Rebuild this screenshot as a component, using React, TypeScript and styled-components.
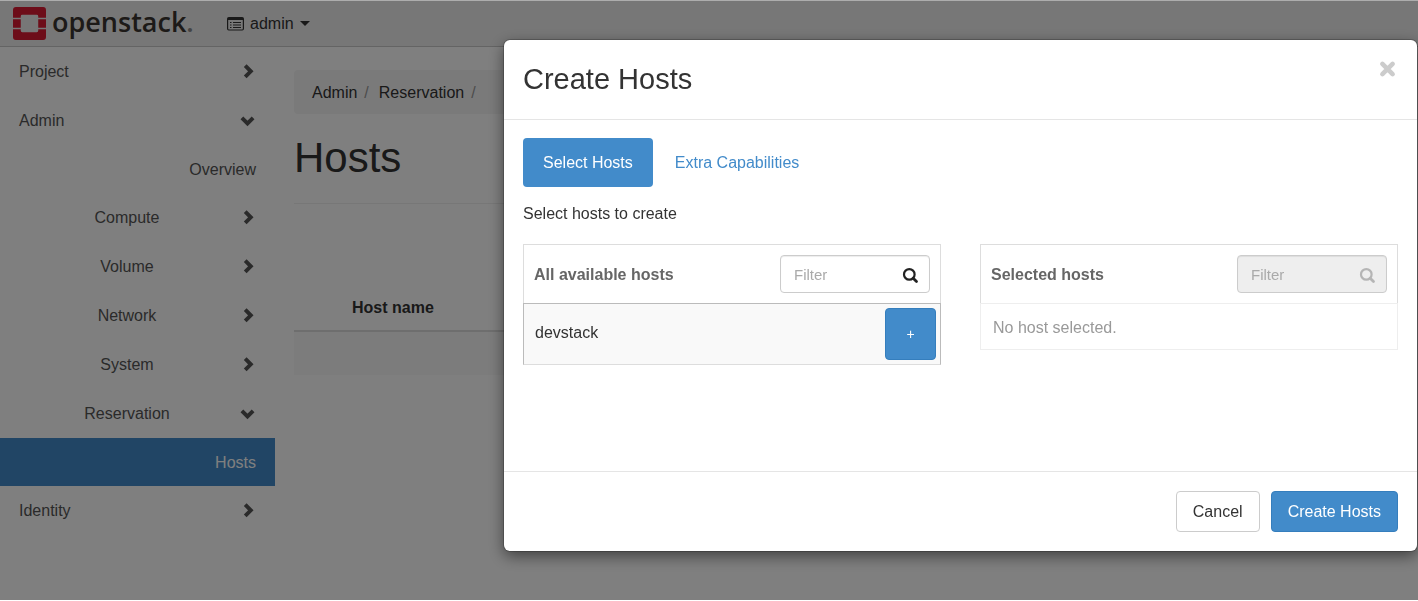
import React from 'react';
import styled, { createGlobalStyle, css } from 'styled-components';

const GlobalStyle = createGlobalStyle`
  *, *::before, *::after { box-sizing: border-box; }
  body {
    margin: 0;
    background: #fff;
    color: #333;
    font-family: "Liberation Sans", Arial, sans-serif;
    font-size: 16px;
    line-height: 24px;
    overflow: hidden;
  }
  button, input { font: inherit; }
  a { color: inherit; text-decoration: none; }
`;

const Page = styled.div`
  min-height: 100vh;
`;

const TopBar = styled.header`
  display: flex;
  align-items: center;
  height: 47px;
  padding: 1px 13px 0;
  background: #eee;
  border-bottom: 1px solid #c8c8c8;
`;

const Brand = styled.a`
  display: flex;
  align-items: center;
  gap: 6px;
  width: 214px;
`;

const BrandName = styled.span`
  padding-bottom: 4px;
  color: #3a3530;
  font-family: "Open Sans", "Liberation Sans", sans-serif;
  font-size: 27px;
  font-weight: 600;
  line-height: 40px;
`;

const BrandDot = styled.span`
  color: #888;
`;

const ProjectMenu = styled.button`
  display: flex;
  align-items: center;
  gap: 6px;
  padding: 0;
  border: 0;
  background: none;
  color: #333;
`;

const Columns = styled.div`
  display: flex;
`;

const Sidebar = styled.nav`
  flex: none;
  width: 275px;
`;

const NavGroup = styled.button<{ $nested?: boolean }>`
  display: flex;
  align-items: center;
  gap: 5px;
  width: 100%;
  height: 49px;
  padding: 0 19px;
  border: 0;
  background: none;
  color: #555;
  text-align: ${(p) => (p.$nested ? 'center' : 'left')};
  span { flex: 1; }
`;

const NavLeaf = styled.a<{ $active?: boolean }>`
  display: block;
  height: 48px;
  padding: 1px 19px 0;
  color: #555;
  line-height: 48px;
  text-align: right;
  ${(p) => p.$active && css`
    background: #428bca;
    color: #fff;
  `}
`;

const Main = styled.main`
  flex: 1;
  padding: 23px 19px 0;
`;

const Breadcrumb = styled.ol`
  display: flex;
  gap: 6px;
  margin: 0;
  padding: 11px 19px 9px 18px;
  border-radius: 4px;
  background: #f5f5f5;
  list-style: none;
  li { display: flex; gap: 7px; margin-right: 4px; }
  li::after { content: "/"; color: #999; }
`;

const PageTitle = styled.h1`
  margin: 0;
  padding: 20px 0 21px;
  border-bottom: 1px solid #eee;
  font-size: 42px;
  font-weight: 400;
  line-height: 48px;
`;

const HostTable = styled.table`
  width: 100%;
  margin-top: 82px;
  border-collapse: collapse;
  th {
    height: 45px;
    padding: 0 0 0 58px;
    border-bottom: 2px solid #ddd;
    text-align: left;
  }
  td {
    height: 44px;
    background: #f9f9f9;
  }
`;

const Backdrop = styled.div`
  position: fixed;
  inset: 0 0 1px;
  display: flex;
  align-items: flex-start;
  padding: 39px 1px 0 504px;
  border-top: 1px solid rgba(255, 255, 255, 0.4);
  background: rgba(0, 0, 0, 0.5);
`;

const Dialog = styled.section`
  flex: 1;
  border-radius: 6px;
  background: #fff;
  box-shadow: 0 0 0 1px rgba(0, 0, 0, 0.2), 0 5px 15px rgba(0, 0, 0, 0.5);
`;

const DialogHeader = styled.header`
  display: flex;
  align-items: flex-start;
  justify-content: space-between;
  height: 80px;
  padding: 19px;
  border-bottom: 1px solid #e5e5e5;
`;

const DialogTitle = styled.h2`
  margin: 0;
  font-size: 29px;
  font-weight: 400;
  line-height: 40px;
`;

const CloseButton = styled.button`
  display: flex;
  padding: 0;
  border: 0;
  background: none;
`;

const DialogBody = styled.div`
  min-height: 351px;
  padding: 18px 19px;
`;

const Tabs = styled.div`
  display: flex;
  gap: 2px;
`;

const Tab = styled.button<{ $active?: boolean }>`
  height: 49px;
  padding: 0 20px;
  border: 0;
  border-radius: 4px;
  background: ${(p) => (p.$active ? '#428bca' : 'none')};
  color: ${(p) => (p.$active ? '#fff' : '#428bca')};
`;

const Hint = styled.p`
  margin: 15px 0 18px;
`;

const Lists = styled.div`
  display: grid;
  grid-template-columns: 1fr 1fr;
  align-items: start;
  gap: 39px;
`;

const ListHeader = styled.div`
  display: flex;
  align-items: center;
  justify-content: space-between;
  height: 59px;
  padding: 0 10px;
  border: 1px solid #ddd;
  border-bottom: 0;
`;

const ListTitle = styled.h3`
  margin: 0;
  padding-top: 2px;
  color: #666;
  font-size: 16px;
  font-weight: 700;
`;

const FilterBox = styled.label<{ $disabled?: boolean }>`
  display: flex;
  align-items: center;
  width: 150px;
  height: 38px;
  padding: 2px 10px 0 13px;
  border: 1px solid #ccc;
  border-radius: 4px;
  background: ${(p) => (p.$disabled ? '#eee' : '#fff')};
  box-shadow: inset 0 1px 1px rgba(0, 0, 0, 0.075);
  color: ${(p) => (p.$disabled ? '#b5b5b5' : '#222')};
  input {
    flex: 1;
    min-width: 0;
    padding: 0;
    border: 0;
    outline: 0;
    background: none;
    font-size: 15px;
  }
  input::placeholder { color: #aaa; }
`;

const HostRow = styled.div`
  display: flex;
  align-items: center;
  justify-content: space-between;
  height: 62px;
  padding: 0 4px 0 11px;
  border: 1px solid #bbb;
  border-bottom-color: #ddd;
  background: #f9f9f9;
`;

const HostName = styled.span`
  padding-bottom: 2px;
`;

const EmptyRow = styled.div`
  height: 47px;
  padding: 12px 12px 10px;
  border: 1px solid #eee;
  color: #999;
`;

const Button = styled.button<{ $primary?: boolean }>`
  height: 41px;
  padding: 0 16px;
  border: 1px solid ${(p) => (p.$primary ? '#357ebd' : '#ccc')};
  border-radius: 4px;
  background: ${(p) => (p.$primary ? '#428bca' : '#fff')};
  color: ${(p) => (p.$primary ? '#fff' : '#333')};
`;

const AddButton = styled(Button)`
  width: 51px;
  height: 52px;
  font-size: 14px;
`;

const DialogFooter = styled.footer`
  display: flex;
  justify-content: flex-end;
  gap: 11px;
  padding: 19px;
  border-top: 1px solid #e5e5e5;
`;

const Chevron = ({ open }: { open?: boolean }) => (
  <svg width="16" height="16" viewBox="0 0 16 16" fill="none" stroke="#555" strokeWidth="3.9" aria-hidden="true">
    <path d={open ? 'M1.9 4.9 7.5 10.500 13.1 4.9' : 'M5.2 1.7 10.8 7.300 5.2 12.900'} />
  </svg>
);

const SearchIcon = () => (
  <svg width="17" height="17" viewBox="0 0 17 17" fill="none" stroke="currentColor" strokeWidth="2.2" aria-hidden="true">
    <circle cx="7.300" cy="7.400" r="5.300" />
    <path d="M11.2 11.300 14.500 14.600" strokeWidth="2.8" strokeLinecap="round" />
  </svg>
);

const LogoMark = () => (
  <svg width="33" height="33" viewBox="0 0 34 34" fill="#da1a32" aria-hidden="true">
    <path d="M3 0H31a3 3 0 0 1 3 3V11H26V9.500a1.500 1.500 0 0 0-1.500-1.500H9.500A1.500 1.500 0 0 0 8 9.500V11H0V3a3 3 0 0 1 3-3Z" />
    <path d="M0 12.500H8V21.500H0ZM26 12.500H34V21.500H26Z" />
    <path d="M0 23H8v1.500A1.500 1.500 0 0 0 9.500 26H24.500a1.500 1.500 0 0 0 1.500-1.500V23H34v8a3 3 0 0 1-3 3H3a3 3 0 0 1-3-3Z" />
  </svg>
);

const ListIcon = () => (
  <svg width="17" height="14" viewBox="0 0 17 14" fill="none" stroke="#333" aria-hidden="true">
    <rect x="0.6" y="0.6" width="15.8" height="12.400" rx="1.200" strokeWidth="1.200" />
    <path d="M1 2H16" strokeWidth="2" />
    <path d="M3 5.500H4.500M3 8H4.500M3 10.500H4.500M6 5.500H14M6 8H14M6 10.500H14" strokeWidth="1.200" />
  </svg>
);

const CloseIcon = () => (
  <svg width="20" height="20" viewBox="0 0 20 20" stroke="#ccc" strokeWidth="4.600" strokeLinecap="round" aria-hidden="true">
    <path d="M4.400 4.900 14.600 15.100M14.600 4.900 4.400 15.100" />
  </svg>
);

type FilterProps = { label: string; disabled?: boolean };

const Filter = ({ label, disabled }: FilterProps) => (
  <FilterBox $disabled={disabled}>
    <input type="text" placeholder="Filter" aria-label={label} disabled={disabled} />
    <SearchIcon />
  </FilterBox>
);

type GroupProps = { label: string; nested?: boolean; open?: boolean };

const Group = ({ label, nested, open }: GroupProps) => (
  <NavGroup type="button" $nested={nested} aria-expanded={!!open}>
    <span>{label}</span>
    <Chevron open={open} />
  </NavGroup>
);

export default function App() {
  return (
    <>
      <GlobalStyle />
      <Page>
        <TopBar>
          <Brand href="#">
            <LogoMark />
            <BrandName>openstack<BrandDot>.</BrandDot></BrandName>
          </Brand>
          <ProjectMenu type="button">
            <ListIcon />
            admin
            <svg width="10" height="5" viewBox="0 0 10 5" fill="#333" aria-hidden="true">
              <path d="M0 0H10L5 5Z" />
            </svg>
          </ProjectMenu>
        </TopBar>
        <Columns>
          <Sidebar>
            <Group label="Project" />
            <Group label="Admin" open />
            <NavLeaf href="#">Overview</NavLeaf>
            <Group label="Compute" nested />
            <Group label="Volume" nested />
            <Group label="Network" nested />
            <Group label="System" nested />
            <Group label="Reservation" nested open />
            <NavLeaf href="#" $active>Hosts</NavLeaf>
            <Group label="Identity" />
          </Sidebar>
          <Main>
            <Breadcrumb>
              <li><a href="#">Admin</a></li>
              <li><a href="#">Reservation</a></li>
            </Breadcrumb>
            <PageTitle>Hosts</PageTitle>
            <HostTable>
              <thead>
                <tr><th scope="col">Host name</th></tr>
              </thead>
              <tbody>
                <tr><td /></tr>
              </tbody>
            </HostTable>
          </Main>
        </Columns>
      </Page>
      <Backdrop>
        <Dialog role="dialog" aria-modal="true" aria-labelledby="dialog-title">
          <DialogHeader>
            <DialogTitle id="dialog-title">Create Hosts</DialogTitle>
            <CloseButton type="button" aria-label="Close"><CloseIcon /></CloseButton>
          </DialogHeader>
          <DialogBody>
            <Tabs role="tablist">
              <Tab type="button" role="tab" aria-selected="true" $active>Select Hosts</Tab>
              <Tab type="button" role="tab" aria-selected="false">Extra Capabilities</Tab>
            </Tabs>
            <Hint>Select hosts to create</Hint>
            <Lists>
              <div>
                <ListHeader>
                  <ListTitle>All available hosts</ListTitle>
                  <Filter label="Filter available hosts" />
                </ListHeader>
                <HostRow>
                  <HostName>devstack</HostName>
                  <AddButton type="button" $primary aria-label="Add devstack">+</AddButton>
                </HostRow>
              </div>
              <div>
                <ListHeader>
                  <ListTitle>Selected hosts</ListTitle>
                  <Filter label="Filter selected hosts" disabled />
                </ListHeader>
                <EmptyRow>No host selected.</EmptyRow>
              </div>
            </Lists>
          </DialogBody>
          <DialogFooter>
            <Button type="button">Cancel</Button>
            <Button type="button" $primary>Create Hosts</Button>
          </DialogFooter>
        </Dialog>
      </Backdrop>
    </>
  );
}
